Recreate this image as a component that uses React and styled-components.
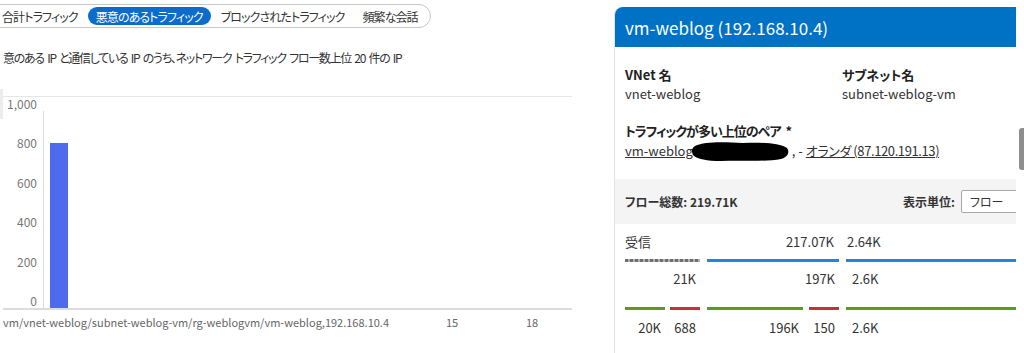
import React from 'react';
import styled, { createGlobalStyle } from 'styled-components';

const GlobalStyle = createGlobalStyle`
  body {
    margin: 0;
    background: #fff;
    font-family: "Noto Sans CJK JP", "Noto Sans", sans-serif;
    font-feature-settings: "palt";
    color: #333;
  }
`;

const Page = styled.div`
  display: flex;
  width: 1024px;
  height: 353px;
  overflow: hidden;
  background: #fff;
`;

const LeftPane = styled.div`
  width: 600px;
  flex: none;
  overflow: hidden;
`;

const TabBar = styled.div`
  display: inline-flex;
  align-items: center;
  gap: 2px;
  height: 22px;
  margin: 4px 0 0 -14px;
  padding: 0 4px 0 7px;
  border: 1px solid #c8c8c8;
  border-radius: 13px;
`;

const Tab = styled.div`
  height: 18px;
  padding: 0 8px;
  display: flex;
  align-items: center;
  font-size: 12px;
  letter-spacing: -0.9px;
  border-radius: 9px;
  white-space: nowrap;
  color: ${(p) => (p.$active ? '#fff' : '#333')};
  background: ${(p) => (p.$active ? '#0b6ccb' : 'transparent')};
`;

const Subtitle = styled.div`
  margin: 21px 0 0 3px;
  font-size: 12px;
  letter-spacing: -1.3px;
  word-spacing: 2px;
  line-height: 18px;
  color: #333;
  white-space: nowrap;
`;

const Chart = styled.div`
  position: relative;
  width: 572px;
  margin-top: 29px;
  border-top: 1px solid #e6e6e6;

  &::before {
    content: '';
    position: absolute;
    left: 0;
    top: -8px;
    width: 3px;
    height: 30px;
    background: #ececec;
  }
`;

const ChartBody = styled.div`
  display: flex;
  height: 211px;
`;

const YAxis = styled.div`
  width: 37px;
  display: flex;
  flex-direction: column;
  justify-content: space-between;
  align-items: flex-end;
  font-size: 12px;
  line-height: 14px;
  color: #777;
`;

const Plot = styled.div`
  align-self: flex-end;
  height: 197px;
  flex: 1;
  margin-left: 6px;
  border-left: 1px solid #dadada;
  display: flex;
  align-items: flex-end;
  padding-left: 6px;
`;

const Bar = styled.div`
  width: 18px;
  background: #4d6bec;
`;

const Baseline = styled.div`
  height: 2px;
  margin-left: 3px;
  background: #dcdcdc;
`;

const XLabels = styled.div`
  display: grid;
  grid-template-columns: 443px 80px auto;
  margin: 4px 0 0 3px;
  font-size: 11px;
  line-height: 16px;
  color: #666;
  white-space: nowrap;
`;

const RightPane = styled.div`
  width: 402px;
  margin-left: 14px;
  padding-top: 7px;
  overflow: hidden;
  flex: none;
`;

const Card = styled.div`
  width: 440px;
  height: 400px;
  border-left: 1px solid #e3e3e3;
  border-top-left-radius: 8px;
`;

const CardHeader = styled.div`
  height: 40px;
  display: flex;
  align-items: center;
  padding-left: 10px;
  background: #0072c6;
  color: #fff;
  font-size: 17px;
  border-top-left-radius: 8px;
`;

const CardBody = styled.div`
  padding: 0 10px;
`;

const InfoGrid = styled.div`
  display: grid;
  grid-template-columns: 217px auto;
  margin-top: 19px;
`;

const Label = styled.div`
  font-size: 13px;
  line-height: 18px;
  font-weight: 700;
  color: #222;
  letter-spacing: ${(p) => (p.$tight ? '-1px' : '0')};
  word-spacing: ${(p) => (p.$tight ? '3px' : '0')};
`;

const Value = styled.div`
  font-size: 13px;
  line-height: 20px;
  color: #333;
`;

const PairBlock = styled.div`
  margin-top: 18px;
  padding-bottom: 17px;
`;

const PairLine = styled.div`
  display: flex;
  align-items: center;
  font-size: 13px;
  line-height: 20px;
  color: #333;
  white-space: nowrap;
`;

const Link = styled.span`
  text-decoration: underline;
  color: #333;
  letter-spacing: ${(p) => (p.$tight ? '-0.4px' : '0')};
`;

const Redaction = styled.svg`
  flex: none;
  margin: 0 2px 0 -2px;
`;

const TotalBar = styled.div`
  display: grid;
  grid-template-columns: 278px auto auto;
  justify-content: start;
  align-items: center;
  height: 45px;
  padding: 0 10px;
  background: #f4f4f4;
  font-size: 12px;
  font-weight: 600;
  color: #333;
  white-space: nowrap;
`;

const Select = styled.div`
  width: 80px;
  height: 21px;
  margin-left: 6px;
  padding-left: 8px;
  display: flex;
  align-items: center;
  background: #fff;
  border: 1px solid #a8a8a8;
  border-radius: 2px;
  font-weight: 400;
  color: #333;
`;

const FlowGrid = styled.div`
  display: grid;
  grid-template-columns: 75px 132px 1fr;
  column-gap: 7px;
  padding: 10px 10px 0;
  font-size: 13px;
  color: #333;
`;

const FlowHead = styled.div`
  grid-column: ${(p) => p.$span || 'auto'};
  display: flex;
  justify-content: space-between;
  line-height: 16px;
  padding-right: ${(p) => (p.$span ? '5px' : '0')};
  padding-left: ${(p) => (p.$span ? '0' : '1px')};
`;

const Group = styled.div`
  display: flex;
  flex-direction: column;
  padding-top: 9px;
`;

const Line = styled.div`
  height: 3px;
  background: ${(p) =>
    p.$tone === 'grey'
      ? 'repeating-linear-gradient(90deg, #6e6e6e 0 3px, #b0b0b0 3px 5px)'
      : p.$tone === 'blue'
      ? '#1e88e0'
      : p.$tone === 'red'
      ? '#c3323e'
      : '#5a9a1c'};
`;

const Num = styled.div`
  line-height: 16px;
  text-align: ${(p) => (p.$left ? 'left' : 'right')};
  padding: ${(p) => (p.$left ? '0 0 0 6px' : '0 4px 0 0')};
`;

const Segments = styled.div`
  display: flex;
  gap: ${(p) => p.$gap || 5}px;
  margin-top: 20px;
`;

const Segment = styled.div`
  display: flex;
  flex-direction: column;
  gap: 10px;
  width: ${(p) => (p.$w ? `${p.$w}px` : 'auto')};
  flex: ${(p) => (p.$w ? 'none' : '1')};
`;

const TopNum = styled(Num)`
  margin-top: 9px;
`;

const ScrollTrack = styled.div`
  width: 8px;
  flex: none;
  padding-top: 128px;
  display: flex;
  justify-content: flex-end;
`;

const Thumb = styled.div`
  width: 5px;
  height: 42px;
  background: #8e8e8e;
  border-radius: 3px 0 0 3px;
`;

const tabs = ['合計トラフィック', '悪意のあるトラフィック', 'ブロックされたトラフィック', '頻繁な会話'];
const yTicks = ['1,000', '800', '600', '400', '200', '0'];

export default function App() {
  return (
    <>
      <GlobalStyle />
      <Page>
        <LeftPane>
          <TabBar>
            {tabs.map((t, i) => (
              <Tab key={t} $active={i === 1}>{t}</Tab>
            ))}
          </TabBar>
          <Subtitle>
            意のある IP と通信している IP のうち、ネットワーク トラフィック フロー数上位 20 件の IP
          </Subtitle>
          <Chart>
            <ChartBody>
              <YAxis>
                {yTicks.map((t) => (
                  <span key={t}>{t}</span>
                ))}
              </YAxis>
              <Plot>
                <Bar style={{ height: `${(838 / 1000) * 197}px` }} />
              </Plot>
            </ChartBody>
            <Baseline />
            <XLabels>
              <span>vm/vnet-weblog/subnet-weblog-vm/rg-weblogvm/vm-weblog,192.168.10.4</span>
              <span>15</span>
              <span>18</span>
            </XLabels>
          </Chart>
        </LeftPane>

        <RightPane>
          <Card>
            <CardHeader>vm-weblog (192.168.10.4)</CardHeader>
            <CardBody>
              <InfoGrid>
                <div>
                  <Label>VNet 名</Label>
                  <Value>vnet-weblog</Value>
                </div>
                <div>
                  <Label>サブネット名</Label>
                  <Value>subnet-weblog-vm</Value>
                </div>
              </InfoGrid>
              <PairBlock>
                <Label $tight>トラフィックが多い上位のペア *</Label>
                <PairLine>
                  <Link>vm-weblog</Link>
                  <Redaction width="99" height="22" viewBox="0 0 99 22">
                    <path
                      d="M4 6 C 14 1, 34 2, 52 3 C 70 2, 88 3, 96 8 C 99 12, 97 17, 90 19 C 74 22, 50 20, 30 21 C 16 21, 6 19, 2 15 C 0 11, 1 8, 4 6 Z"
                      fill="#000"
                    />
                  </Redaction>
                  <span>, -&nbsp;</span>
                  <Link $tight>オランダ (87.120.191.13)</Link>
                </PairLine>
              </PairBlock>
            </CardBody>
            <TotalBar>
              <span>フロー総数: 219.71K</span>
              <span>表示単位:</span>
              <Select>フロー</Select>
            </TotalBar>
            <FlowGrid>
              <FlowHead $span="1 / span 2">
                <span>受信</span>
                <span>217.07K</span>
              </FlowHead>
              <FlowHead>2.64K</FlowHead>

              <Group>
                <Line $tone="grey" />
                <TopNum>21K</TopNum>
                <Segments $gap={5}>
                  <Segment $w={40}>
                    <Line $tone="green" />
                    <Num>20K</Num>
                  </Segment>
                  <Segment $w={30}>
                    <Line $tone="red" />
                    <Num>688</Num>
                  </Segment>
                </Segments>
              </Group>
              <Group>
                <Line $tone="blue" />
                <TopNum>197K</TopNum>
                <Segments $gap={6}>
                  <Segment $w={96}>
                    <Line $tone="green" />
                    <Num>196K</Num>
                  </Segment>
                  <Segment $w={30}>
                    <Line $tone="red" />
                    <Num>150</Num>
                  </Segment>
                </Segments>
              </Group>
              <Group>
                <Line $tone="blue" />
                <TopNum $left>2.6K</TopNum>
                <Segments>
                  <Segment>
                    <Line $tone="green" />
                    <Num $left>2.6K</Num>
                  </Segment>
                </Segments>
              </Group>
            </FlowGrid>
          </Card>
        </RightPane>
        <ScrollTrack>
          <Thumb />
        </ScrollTrack>
      </Page>
    </>
  );
}
